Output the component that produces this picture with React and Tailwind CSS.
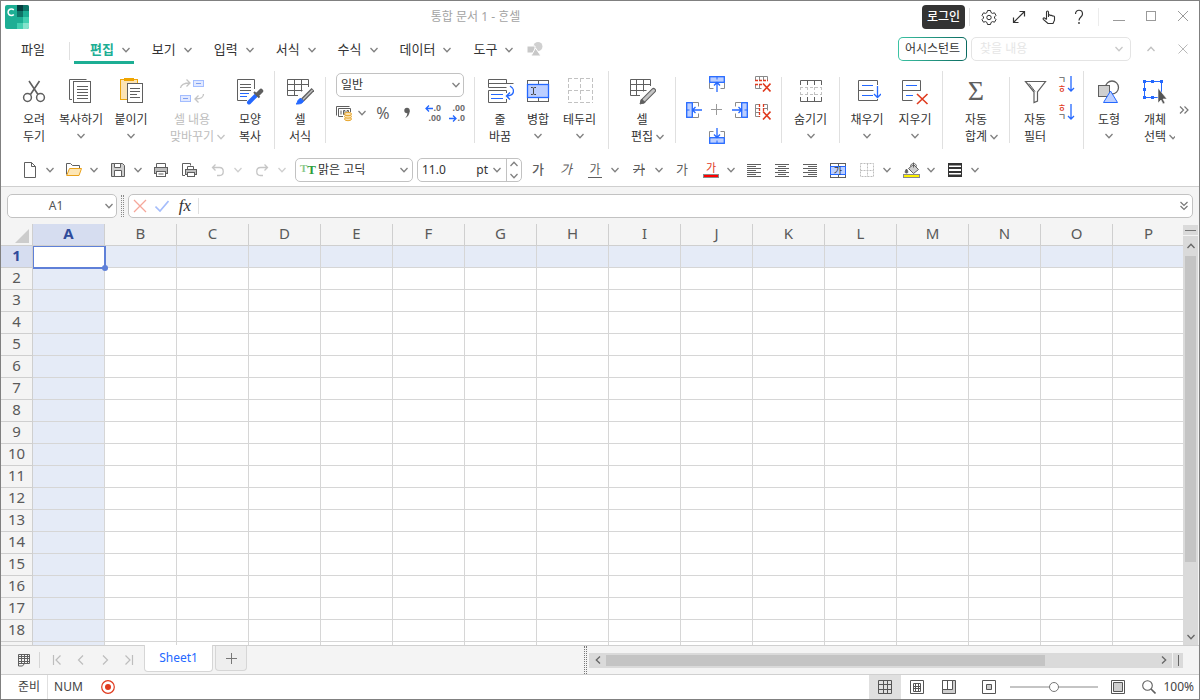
import React, { useEffect, useRef, useState } from 'react';
import { clsx } from 'clsx';

const GREY = '#5f5f5f';
const BLUE = '#2468ff';
const PALE = '#bccfff';
const RED = '#e03a1e';

const Ico = ({ w = 28, h = w, stroke = GREY, className, children }) => (
  <svg
    width={w}
    height={h}
    viewBox={`0 0 ${w} ${h}`}
    fill="none"
    stroke={stroke}
    className={clsx('block shrink-0', className)}
    aria-hidden="true"
  >
    {children}
  </svg>
);

const Chevron = ({ stroke = '#808080', className }) => (
  <Ico w={10} h={8} stroke={stroke} className={className}>
    <path d="M1.5 2l3.5 3.7L8.500 2" strokeWidth="1.3" />
  </Ico>
);

/* ---------- ribbon icons ---------- */

const ScissorsIcon = () => (
  <Ico>
    <path d="M9 4l9 13.500M19.500 4l-9 13.500" strokeWidth="1.6" />
    <circle cx="7.500" cy="20.500" r="3.900" strokeWidth="1.5" />
    <circle cx="20.500" cy="20.500" r="3.900" strokeWidth="1.5" />
  </Ico>
);

const CopyIcon = () => (
  <Ico>
    <path d="M19.500 2.500h-17v20h2.500" />
    <rect x="6.500" y="4.500" width="17" height="21" />
    <path d="M10 9.500h11M10 12.500h11M10 15.500h11M10 18.500h11M10 21.500h11" />
  </Ico>
);

const PasteIcon = () => (
  <Ico>
    <rect x="3.500" y="2.500" width="17" height="20" fill="#fbe3b4" stroke="#eda60c" />
    <rect x="7" y="1" width="10" height="3" fill="#f0a500" stroke="none" />
    <rect x="10.500" y="6.500" width="15" height="19" fill="#fff" />
    <path d="M13 11.500h10M13 14.500h10M13 17.500h7M13 20.500h10" />
  </Ico>
);

const SwapIcon = () => (
  <Ico stroke="#c4c4c4">
    <path d="M2.500 11C3 7.500 6 6 12 6M8.500 2.500L12 6 8.500 9.500" strokeWidth="1.3" />
    <path d="M25.500 17c0 3.500-2 5-8.500 5M20.500 18.500L17 22l3.500 3.500" strokeWidth="1.3" />
    <rect x="15.500" y="3.500" width="10" height="6" fill="#e2e9ff" stroke="#a3bdff" />
    <rect x="2.500" y="18.500" width="10" height="6" fill="#e2e9ff" stroke="#a3bdff" />
    <path d="M18 6.500h5M5 21.500h5" stroke="#7f9ff0" />
  </Ico>
);

const FormatCopyIcon = () => (
  <Ico>
    <path d="M18.500 12V2.500h-17v21H11" />
    <path d="M4 7.500h11M4 10.500h11M4 13.500h11" />
    <path d="M4 16.500h9M4 19.500h7" stroke={BLUE} />
    <path d="M13 25.500l8-8" stroke={BLUE} strokeWidth="4" strokeLinecap="round" />
    <path d="M18 15l5.500 5.500" strokeWidth="2" />
    <path d="M22 17l3-3" strokeWidth="4.500" strokeLinecap="round" />
  </Ico>
);

const CellFormatIcon = () => (
  <Ico>
    <path d="M22.500 10V2.500h-21v16H12M1.500 7.500h21M1.500 13.500h15M8.500 2.500v16M15.500 2.500v12" />
    <path d="M27 12.500L16.500 23" strokeWidth="4" />
    <path d="M26.500 13L17 22.500" stroke="#bdbdbd" strokeWidth="1.6" />
    <path d="M10 27c2-1 1-5 5-5.500l2.500 2.500c-1 3-4.500 3-7.500 3z" fill={BLUE} stroke={BLUE} />
  </Ico>
);

const WrapIcon = () => (
  <Ico>
    <path d="M20.500 2.500h-18v8h18M20.500 2.500v4M2.500 6.500h25M20.500 16v-2.500h-18v12h18V22" />
    <path d="M5 17.500h12M5 21.500h12" stroke={BLUE} />
    <path d="M24 9c5 3 5 9.500-3 10M24 15.500L20.500 19l3.500 3.500" stroke={BLUE} strokeWidth="1.4" />
  </Ico>
);

const MergeIcon = () => (
  <Ico>
    <rect x="3.500" y="3.500" width="21" height="21" />
    <path d="M14.500 3.500v21" />
    <rect x="3.500" y="7.500" width="21" height="13" fill={PALE} stroke={BLUE} strokeWidth="1.3" />
    <path d="M7 10.500c1.500 0 2.500 0 2.500 1v5c0 1-1 1-2.500 1M12 10.500c-1.500 0-2.500 0-2.500 1M12 17.500c-1.500 0-2.500 0-2.500-1" stroke="#444" />
  </Ico>
);

const BorderIcon = () => (
  <Ico stroke="#c2c2c2">
    <path d="M2 1.500h25M2 13.500h25M2 25.500h25M2.500 1v25M14.500 1v25M26.500 1v25" strokeDasharray="4 2" />
  </Ico>
);

const CellEditIcon = () => (
  <Ico>
    <path d="M22.500 9V2.500h-20v16H12M2.500 7.500h20M2.500 13.500h16M8.500 2.500v16M15.500 2.500v12" />
    <path d="M25.500 13.500L15 24" strokeWidth="5" strokeLinecap="round" />
    <path d="M25.500 13.500L16 23" stroke="#c4c4c4" strokeWidth="3" strokeLinecap="round" />
    <path d="M13.500 22l-1.500 5 5-1.500z" fill={GREY} />
  </Ico>
);

const HideIcon = () => (
  <Ico>
    <path d="M3.500 8V3.500h21V8M10.500 3.500V8M17.500 3.500V8M3.500 20v4.500h21V20M10.500 20v4.500M17.500 20v4.500" />
    <path d="M3 10.500h22M3 17.500h22M3.500 10v8M10.500 10v8M17.500 10v8M24.500 10v8" stroke="#c2c2c2" strokeDasharray="3 2" />
  </Ico>
);

const FillIcon = () => (
  <Ico>
    <path d="M24.500 8V3.500h-19v20h19V22M5.500 13.500h15" />
    <path d="M9 8.500h11M9 18.500h11" stroke={BLUE} />
    <path d="M24.500 9v11M21 17l3.500 3.500L28 17" stroke={BLUE} strokeWidth="1.3" />
  </Ico>
);

const EraseIcon = () => (
  <Ico>
    <path d="M19.500 14V3.500h-18v20h10M1.500 13.500h18" />
    <path d="M5 8.500h11M5 18.500h7" stroke={BLUE} />
    <path d="M16 17l10.500 10M26.500 17L16 27" stroke={RED} strokeWidth="1.6" />
  </Ico>
);

const FunnelIcon = () => (
  <Ico>
    <path d="M4.500 4.500h20l-8 10.500V24l-3.500 1.500V15z" strokeWidth="1.200" />
    <path d="M8 6.500l6 8" />
  </Ico>
);

const ShapesIcon = () => (
  <Ico>
    <circle cx="17" cy="10.500" r="6.500" strokeWidth="1.300" />
    <rect x="3.500" y="8.500" width="11" height="11" fill="#cfcfcf" />
    <path d="M15.500 14l7 11.500h-14z" fill={PALE} stroke={BLUE} />
  </Ico>
);

const ObjectSelectIcon = () => (
  <Ico>
    <rect x="3.500" y="4.500" width="17" height="16" stroke={BLUE} />
    <path
      d="M2 3h3v3H2zM10 3h3v3h-3zM19 3h3v3h-3zM2 11h3v3H2zM2 19h3v3H2zM10 19h3v3h-3z"
      fill={BLUE}
      stroke="none"
    />
    <path d="M17 11v15l3-3 2 4 2-1-2-4h4z" fill="#555" stroke="#fff" strokeWidth=".6" />
  </Ico>
);

const SigmaIcon = () => (
  <span className="flex h-7 w-7 items-center justify-center font-['Liberation_Serif',serif] text-[28px] leading-7 text-[#5f5f5f]">
    Σ
  </span>
);

/* insert / delete cell icons share one drawing, turned to each side */
const InsertCellsIcon = ({ turn }) => (
  <Ico w={16}>
    <g transform={`rotate(${turn} 8 8)`}>
      <path d="M.5 7v5.500h4M15.500 7v5.500h-4" stroke="#8a8a8a" />
      <rect x=".7" y=".7" width="14.600" height="5.600" fill={PALE} stroke={BLUE} strokeWidth="1.3" />
      <path d="M8 .5v3" stroke={BLUE} />
      <path d="M8 16V6.500M5 9.500l3-3 3 3" stroke={BLUE} strokeWidth="1.3" />
    </g>
  </Ico>
);

const DeleteCellsIcon = ({ vertical }) => (
  <Ico w={16}>
    <g transform={vertical ? 'matrix(0 1 1 0 0 0)' : undefined}>
      <path d="M.5 4V.5h12V4M4.500.5V4M8.500.5V4M.5 9v3.500h6M4.500 9v3" stroke="#8a8a8a" />
      <path d="M0 4.500h13M0 8.500h7" stroke={RED} strokeDasharray="3 1" strokeWidth="1.3" />
    </g>
    <path d="M8 7.500l7.500 8M15.500 7.500l-7.500 8" stroke={RED} strokeWidth="1.6" />
  </Ico>
);

const CurrencyIcon = () => (
  <Ico w={17}>
    <path d="M.5 10.500V1.500h13M2.500 11.500V3.500h12V7M2.500 11.500H7" />
    <path d="M5 5.500v4M7.500 5.500h1.500v4H7.500zM11 7V5.500h1.500V7" />
    <g fill="#fbe3b4" stroke="#e8a62c">
      <ellipse cx="12" cy="14" rx="3.500" ry="1.700" />
      <ellipse cx="12" cy="11.500" rx="3.500" ry="1.700" />
      <ellipse cx="12" cy="9" rx="3.500" ry="1.700" />
    </g>
  </Ico>
);

/* ---------- quick toolbar icons ---------- */

const NewIcon = () => (
  <Ico w={16}>
    <path d="M2.500.5h7l4 4v11h-11zM9.500.5v4h4" />
  </Ico>
);

const OpenIcon = () => (
  <Ico w={16}>
    <path d="M.5 12.500v-11h4l2 2h7V6" />
    <path d="M3.500 6.500h12l-2.500 7H.7z" fill="#fde6b5" stroke="#eaa21a" />
  </Ico>
);

const SaveIcon = () => (
  <Ico w={16}>
    <path d="M1.500 1.500h11l2 2v11h-13z" fill="#cfcfcf" />
    <path d="M4.500 1.500h6v4h-6zM4.500 8.500h7v6h-7z" fill="#fff" />
  </Ico>
);

const PrintIcon = () => (
  <Ico w={16}>
    <path d="M3.500 5V1.500h9V5" />
    <rect x="1.500" y="5.500" width="13" height="6" fill="#bdbdbd" />
    <rect x="3.500" y="9.500" width="9" height="5" fill="#fff" />
    <path d="M5.500 12h5" />
  </Ico>
);

const PreviewIcon = () => (
  <Ico w={16}>
    <path d="M4 13.500H1.500v-12h8V3.500" />
    <path d="M6.500 7V4.500h6V7" />
    <rect x="4.500" y="7.500" width="11" height="5" fill="#bdbdbd" />
    <rect x="6.500" y="10.500" width="7" height="4" fill="#fff" />
  </Ico>
);

const UndoIcon = ({ flip }) => (
  <Ico w={14} stroke="#c6c6c6" className={flip && '-scale-x-100'}>
    <path d="M4.500 1.500L1.500 4.500l3 3M1.500 4.500h7c5 0 5 8 0 8H6" strokeWidth="1.300" />
  </Ico>
);

const AlignIcon = ({ side }) => {
  const short = { left: 'M1 4.500h9M1 8.500h9M1 12.500h9', center: 'M4 4.500h8M4 8.500h8M4 12.500h8', right: 'M6 4.500h9M6 8.500h9M6 12.500h9' };
  return (
    <Ico w={16}>
      <path d="M1 2.500h14M1 6.500h14M1 10.500h14M1 14.500h14" />
      <path d={short[side]} />
    </Ico>
  );
};

const MergeCenterIcon = () => (
  <Ico w={16}>
    <rect x=".5" y="1.500" width="15" height="14" />
    <path d="M8.500 1.500v14" />
    <rect x=".5" y="4.500" width="15" height="8" fill={PALE} stroke={BLUE} />
    <text x="8" y="12" textAnchor="middle" fontSize="9" fill="#333" stroke="none">가</text>
  </Ico>
);

const SmallBorderIcon = () => (
  <Ico w={14} stroke="#bdbdbd">
    <path d="M.5.500h13v13H.5zM7.500.500v13M.5 7.500h13" strokeDasharray="2 1" />
  </Ico>
);

const BucketIcon = () => (
  <Ico w={17}>
    <path d="M5.500 6.500l5-4 5 5-5 4z" fill="#cfcfcf" />
    <path d="M10.500.5v5M7.500 4.500c0-4 6-4 6 0" />
    <path d="M3.500 7c-2 3-1.500 4 0 4s2-1 0-4z" fill={GREY} />
    <rect x=".5" y="12.500" width="16" height="3" fill="#fff200" stroke="#8a8a8a" />
  </Ico>
);

const LineStyleIcon = () => (
  <Ico w={14} stroke="#333">
    <rect x=".5" y=".5" width="13" height="13" />
    <path d="M0 1.500h14M0 5h14M0 9h14M0 12.500h14" strokeWidth="2" />
  </Ico>
);

/* ---------- building blocks ---------- */

const Divider = ({ tall }) => (
  <div className={clsx('mx-[3px] w-px shrink-0 bg-[#e0e0e0]', tall ? 'h-[78px]' : 'h-[66px]')} />
);

const RibbonButton = ({ icon, lines, menu, side, disabled, className }) => (
  <button
    type="button"
    disabled={disabled}
    className={clsx(
      'flex h-[70px] shrink-0 flex-col items-center pt-0.5 text-xs leading-[17px] whitespace-nowrap',
      disabled ? 'text-[#bdbdbd]' : 'text-[#333]',
      className
    )}
  >
    {icon}
    <span className="mt-1.5">{lines[0]}</span>
    {lines[1] && (
      <span className="flex items-center">
        {lines[1]}
        {side && <Chevron className="-mr-3 ml-0.5" stroke={disabled ? '#c4c4c4' : '#808080'} />}
      </span>
    )}
    {menu && <Chevron className="mt-1" />}
  </button>
);

const ToolButton = ({ label, menu, faded, children }) => (
  <div className="flex shrink-0 items-center">
    <button
      type="button"
      aria-label={label}
      className={clsx('flex h-6 items-center justify-center text-[#5f5f5f]', menu ? 'w-[26px]' : 'w-6')}
    >
      {children}
    </button>
    {menu && (
      <button type="button" aria-label={`${label} 메뉴`} className="flex h-6 w-[14px] items-center justify-center">
        <Chevron stroke={faded ? '#cfcfcf' : '#808080'} />
      </button>
    )}
  </div>
);

const IconButton = ({ label, className, children }) => (
  <button type="button" aria-label={label} className={clsx('flex shrink-0 items-center justify-center', className)}>
    {children}
  </button>
);

/* ---------- sections ---------- */

const Logo = () => (
  <Ico w={24} stroke="none">
    <rect width="24" height="24" rx="2" fill="#1dae94" />
    <path d="M12 0h6v6h-6z" fill="#063f40" />
    <path d="M18 0h4a2 2 0 012 2v4h-6z" fill="#0d7568" />
    <path d="M12 6h6v6h-6z" fill="#0f7468" />
    <path d="M18 6h6v6h-6z" fill="#1dae94" />
    <path d="M18 12h6v6h-6zM12 18h6v6h-6z" fill="#42cfb0" />
    <path d="M18 18h6v4a2 2 0 01-2 2h-4z" fill="#86e3cc" />
    <path d="M8.800 5A3.300 3.300 0 108.800 9.500" stroke="#fff" strokeWidth="1.500" />
  </Ico>
);

const TitleBar = () => (
  <header className="flex h-8 shrink-0 items-center pl-1">
    <Logo />
    <h1 className="min-w-0 flex-1 truncate text-center text-xs text-[#a3a3a3]">통합 문서 1 - ᄒᆞᆫ셀</h1>
    <button type="button" className="h-6 w-[43px] rounded bg-[#333] text-xs font-medium text-white">로그인</button>
    <div className="mx-1 h-[18px] w-px bg-[#e0e0e0]" />
    <IconButton label="설정" className="h-8 w-[30px]">
      <Ico w={16} stroke="#333">
        <path d="M6.500 1.500h3l.5 2 1.500.9 2-.6 1.500 2.600-1.500 1.500v1.200l1.500 1.500-1.500 2.600-2-.6-1.500.9-.5 2h-3l-.5-2-1.500-.9-2 .6L1 10.600l1.500-1.500V7.900L1 6.400l1.500-2.600 2 .6L6 3.500z" strokeLinejoin="round" />
        <circle cx="8" cy="8.500" r="2.200" />
      </Ico>
    </IconButton>
    <IconButton label="전체 화면" className="h-8 w-[30px]">
      <Ico w={14} stroke="#333">
        <path d="M2 12L12 2M7.500 1.500h5v5M1.500 7.500v5h5" strokeWidth="1.200" />
      </Ico>
    </IconButton>
    <IconButton label="터치 모드" className="h-8 w-[30px]">
      <Ico w={14} stroke="#333">
        <path d="M4.500 9.500V2.200c0-1.600 2-1.600 2 0V7M6.500 5.500c.5-1 2-.8 2 .3M8.500 6c.5-1 2-.8 2 .3M10.500 6.500c.6-.8 2-.5 2 .6v3l-1.500 3.400H6L1.300 9.300c-.6-1.200.8-1.800 1.500-1.200l1.700 1.400" strokeWidth="1.100" />
      </Ico>
    </IconButton>
    <IconButton label="도움말" className="h-8 w-[30px]">
      <Ico w={12} h={16} stroke="#333">
        <path d="M2.500 5c0-5 7-5 7 0 0 3-3.500 3-3.500 6.500" strokeWidth="1.200" />
        <circle cx="6" cy="14" r=".9" fill="#333" stroke="none" />
      </Ico>
    </IconButton>
    <div className="mx-1 h-[18px] w-px bg-[#ececec]" />
    <IconButton label="최소화" className="h-8 w-8">
      <Ico w={12} stroke="#9a9a9a"><path d="M0 9.500h12" /></Ico>
    </IconButton>
    <IconButton label="최대화" className="h-8 w-8">
      <Ico w={12} stroke="#9a9a9a"><rect x="1.500" y=".5" width="9" height="9" /></Ico>
    </IconButton>
    <IconButton label="닫기" className="h-8 w-8">
      <Ico w={12} stroke="#9a9a9a"><path d="M1 0l10 10M11 0L1 10" /></Ico>
    </IconButton>
  </header>
);

const menus = ['편집', '보기', '입력', '서식', '수식', '데이터', '도구'];

const MenuBar = () => {
  const [active, setActive] = useState('편집');

  return (
    <nav className="flex h-[33px] shrink-0 text-[13px] text-[#333]">
      <button type="button" className="h-[31px] shrink-0 pt-0.5 pl-5">파일</button>
      <div className="mt-[9px] mr-1 ml-6 h-[18px] w-px shrink-0 bg-[#e0e0e0]" />
      <div className="flex shrink-0 gap-0.5">
        {menus.map((name) => (
          <button
            key={name}
            type="button"
            onClick={() => setActive(name)}
            className={clsx(
              'flex h-[31px] items-center gap-[7px] border-b-[3px] pt-1.5 pr-[3px] pl-4',
              name === active ? 'border-[#1dae94] font-bold text-[#1dae94]' : 'border-transparent'
            )}
          >
            {name}
            <Chevron />
          </button>
        ))}
      </div>
      <Ico w={16} className="mt-2 ml-2.5" stroke="none">
        <circle cx="11" cy="5.500" r="4.500" fill="#d0d0d0" />
        <path d="M0 5h8v7H0z" fill="#c8c8c8" stroke="#fff" />
        <path d="M8.500 7l5.500 8H4z" fill="#c8c8c8" stroke="#fff" />
      </Ico>
      <div className="ml-auto flex h-8 shrink-0 items-center">
        <div className="mr-1 rounded-[5px] bg-gradient-to-r from-[#3cc4a4] to-[#0a6a60] p-px">
          <button type="button" className="block h-[22px] w-[67px] rounded bg-white text-xs whitespace-nowrap">어시스턴트</button>
        </div>
        <div className="flex h-6 w-40 items-center rounded-[5px] border border-[#e4e4e4] pr-1.5 pl-2">
          <input
            type="text"
            aria-label="찾을 내용"
            placeholder="찾을 내용"
            className="w-0 flex-1 text-xs outline-none placeholder:text-[#e6e6e6]"
          />
          <Chevron stroke="#c8c8c8" />
        </div>
        <IconButton label="리본 접기" className="ml-1 h-6 w-8">
          <Chevron stroke="#c0c0c0" className="rotate-180" />
        </IconButton>
        <IconButton label="문서 닫기" className="h-6 w-8">
          <Ico w={10} stroke="#b8b8b8"><path d="M.5.500l9 9M9.500.500l-9 9" /></Ico>
        </IconButton>
      </div>
    </nav>
  );
};

const DecimalIcon = ({ more }) => (
  <span className="flex w-4 flex-col font-['Liberation_Sans',sans-serif] text-[9px] leading-[10px] font-bold text-[#6a6a6a]">
    <span className="flex items-center justify-end">
      {!more && (
        <Ico w={8} h={7} stroke={BLUE}><path d="M8 3.500H1M4 .5l-3 3 3 3" strokeWidth="1.300" /></Ico>
      )}
      {more ? '.00' : '.0'}
    </span>
    <span className="flex items-center justify-end">
      {more && (
        <Ico w={8} h={7} stroke={BLUE}><path d="M0 3.500h7M4 .5l3 3-3 3" strokeWidth="1.300" /></Ico>
      )}
      {more ? '.0' : '.00'}
    </span>
  </span>
);

const NumberGroup = () => (
  <div className="flex h-[74px] w-[142px] shrink-0 flex-col px-[7px]">
    <div className="relative">
      <select
        aria-label="표시 형식"
        className="block h-6 w-full appearance-none rounded-[5px] border border-[#c2c2c2] bg-white pl-1 text-xs text-[#333]"
      >
        <option>일반</option>
      </select>
      <Chevron className="pointer-events-none absolute top-2 right-[3px]" />
    </div>
    <div className="mt-1 flex items-center">
      <IconButton label="통화" className="h-6 w-[17px]"><CurrencyIcon /></IconButton>
      <IconButton label="통화 메뉴" className="h-6 w-[18px]"><Chevron /></IconButton>
      <IconButton label="백분율" className="h-6 w-6 text-base text-[#5f5f5f]">%</IconButton>
      <IconButton label="쉼표" className="h-6 w-6">
        <Ico w={8} h={12} stroke="none">
          <circle cx="4" cy="3.500" r="2.700" fill={GREY} />
          <path d="M6.700 3.500c0 4-2 6.500-4.500 7.500 1.800-2 2.300-3.500 2-6z" fill={GREY} />
        </Ico>
      </IconButton>
      <div className="h-5 w-px bg-[#e0e0e0]" />
      <IconButton label="자릿수 줄임" className="h-6 w-7"><DecimalIcon /></IconButton>
      <IconButton label="자릿수 늘림" className="h-6 w-5"><DecimalIcon more /></IconButton>
    </div>
  </div>
);

const InsertGroup = () => (
  <div className="flex w-[99px] shrink-0 items-center gap-[7px] px-[7px]">
    <IconButton label="왼쪽에 열 추가"><InsertCellsIcon turn={-90} /></IconButton>
    <div className="flex flex-col items-center gap-2.5">
      <IconButton label="위에 행 추가"><InsertCellsIcon turn={0} /></IconButton>
      <Ico w={16} stroke="#9a9a9a"><path d="M7.500 2v11M2 7.500h11" /></Ico>
      <IconButton label="아래에 행 추가"><InsertCellsIcon turn={180} /></IconButton>
    </div>
    <IconButton label="오른쪽에 열 추가"><InsertCellsIcon turn={90} /></IconButton>
    <div className="flex flex-col gap-3 self-start">
      <IconButton label="행 지우기"><DeleteCellsIcon /></IconButton>
      <IconButton label="열 지우기"><DeleteCellsIcon vertical /></IconButton>
    </div>
  </div>
);

const SortButton = ({ label, top, bottom, reverse }) => (
  <IconButton label={label} className="h-[18px] w-[18px]">
    <span className="flex w-[10px] flex-col items-center text-[9px] leading-[9px] font-medium">
      <span className={reverse ? 'text-[#e03a1e]' : 'text-[#5f5f5f]'}>{top}</span>
      <span className={reverse ? 'text-[#5f5f5f]' : 'text-[#e03a1e]'}>{bottom}</span>
    </span>
    <Ico w={8} h={16} stroke={BLUE}>
      <path d="M4 0v15M1 12l3 3 3-3" strokeWidth="1.300" />
    </Ico>
  </IconButton>
);

const Ribbon = () => (
  <div className="flex h-[88px] shrink-0 items-center overflow-hidden pl-3">
    <RibbonButton icon={<ScissorsIcon />} lines={['오려', '두기']} className="w-[42px]" />
    <RibbonButton icon={<CopyIcon />} lines={['복사하기']} menu className="w-[52px]" />
    <RibbonButton icon={<PasteIcon />} lines={['붙이기']} menu className="w-12" />
    <RibbonButton icon={<SwapIcon />} lines={['셀 내용', '맞바꾸기']} side disabled className="w-[74px]" />
    <RibbonButton icon={<FormatCopyIcon />} lines={['모양', '복사']} className="w-[42px]" />
    <Divider tall />
    <RibbonButton icon={<CellFormatIcon />} lines={['셀', '서식']} className="w-11" />
    <Divider />
    <NumberGroup />
    <Divider />
    <RibbonButton icon={<WrapIcon />} lines={['줄', '바꿈']} className="w-11" />
    <RibbonButton icon={<MergeIcon />} lines={['병합']} menu className="w-8" />
    <RibbonButton icon={<BorderIcon />} lines={['테두리']} menu className="w-[51px]" />
    <Divider tall />
    <RibbonButton icon={<CellEditIcon />} lines={['셀', '편집']} side className="w-[60px]" />
    <Divider />
    <InsertGroup />
    <Divider />
    <RibbonButton icon={<HideIcon />} lines={['숨기기']} menu className="w-[51px]" />
    <Divider />
    <RibbonButton icon={<FillIcon />} lines={['채우기']} menu className="w-12" />
    <RibbonButton icon={<EraseIcon />} lines={['지우기']} menu className="w-12" />
    <Divider tall />
    <RibbonButton icon={<SigmaIcon />} lines={['자동', '합계']} side className="w-[60px]" />
    <Divider />
    <RibbonButton icon={<FunnelIcon />} lines={['자동', '필터']} className="w-11" />
    <div className="flex h-[70px] w-[23px] shrink-0 flex-col gap-2.5">
      <SortButton label="오름차순 정렬" top="ㄱ" bottom="ㅎ" />
      <SortButton label="내림차순 정렬" top="ㅎ" bottom="ㄱ" reverse />
    </div>
    <Divider tall />
    <RibbonButton icon={<ShapesIcon />} lines={['도형']} menu className="w-11" />
    <RibbonButton icon={<ObjectSelectIcon />} lines={['개체', '선택']} side className="ml-1 w-10 overflow-hidden" />
    <IconButton label="더 보기" className="h-6 w-[18px]">
      <Ico w={10} h={8} stroke="#777"><path d="M1 .5L4.500 4 1 7.500M5.500.5L9 4 5.500 7.500" strokeWidth="1.200" /></Ico>
    </IconButton>
  </div>
);

const QuickBar = () => (
  <div className="flex h-8 shrink-0 items-center gap-1 overflow-hidden pl-4">
    <ToolButton label="새 문서" menu><NewIcon /></ToolButton>
    <ToolButton label="불러오기" menu><OpenIcon /></ToolButton>
    <ToolButton label="저장하기" menu><SaveIcon /></ToolButton>
    <ToolButton label="인쇄"><PrintIcon /></ToolButton>
    <ToolButton label="미리 보기"><PreviewIcon /></ToolButton>
    <ToolButton label="되돌리기" menu faded><UndoIcon /></ToolButton>
    <ToolButton label="다시 실행" menu faded><UndoIcon flip /></ToolButton>
    <div className="ml-0.5 flex h-6 w-[118px] shrink-0 items-center rounded-[5px] border border-[#c2c2c2] pr-[3px] pl-1">
      <span className="flex w-[14px] font-['Liberation_Serif',serif] font-bold" aria-hidden="true">
        <span className="text-[11px] leading-3 text-[#8cc98c]">T</span>
        <span className="text-[13px] leading-4 text-[#2f9e3a]">T</span>
      </span>
      <select aria-label="글꼴" className="ml-1 w-0 flex-1 appearance-none bg-transparent text-xs text-[#333]">
        <option>맑은 고딕</option>
      </select>
      <Chevron className="pointer-events-none" />
    </div>
    <div className="flex h-6 w-[105px] shrink-0 items-center rounded-[5px] border border-[#c2c2c2] text-xs text-[#333]">
      <input type="text" aria-label="글자 크기" defaultValue="11.0" className="w-0 flex-1 pl-1 outline-none" />
      <span>pt</span>
      <IconButton label="크기 목록" className="h-5 w-[18px]"><Chevron /></IconButton>
      <div className="flex h-full w-[15px] flex-col items-center justify-center gap-1 border-l border-[#c2c2c2]">
        <IconButton label="크게"><Chevron className="rotate-180" /></IconButton>
        <IconButton label="작게"><Chevron /></IconButton>
      </div>
    </div>
    <ToolButton label="진하게"><span className="text-[13px] font-medium">가</span></ToolButton>
    <ToolButton label="기울임"><span className="text-[13px] italic">가</span></ToolButton>
    <ToolButton label="밑줄" menu>
      <span className="w-[14px] border-b border-[#5f5f5f] text-center text-xs leading-[14px]">가</span>
    </ToolButton>
    <ToolButton label="취소선" menu><span className="text-[13px] line-through">가</span></ToolButton>
    <ToolButton label="외곽선"><span className="text-[13px]">가</span></ToolButton>
    <ToolButton label="글자 색" menu>
      <span className="flex flex-col items-center text-[11px] leading-3 text-[#e03a1e]">
        가
        <span className="h-1 w-4 border border-[#8a8a8a] bg-[#f00]" />
      </span>
    </ToolButton>
    <ToolButton label="왼쪽 정렬"><AlignIcon side="left" /></ToolButton>
    <ToolButton label="가운데 정렬"><AlignIcon side="center" /></ToolButton>
    <ToolButton label="오른쪽 정렬"><AlignIcon side="right" /></ToolButton>
    <ToolButton label="병합하고 가운데 맞춤"><MergeCenterIcon /></ToolButton>
    <ToolButton label="테두리" menu><SmallBorderIcon /></ToolButton>
    <ToolButton label="채우기 색" menu><BucketIcon /></ToolButton>
    <ToolButton label="선 모양" menu><LineStyleIcon /></ToolButton>
  </div>
);

const FormulaBar = () => (
  <div className="flex h-[38px] shrink-0 items-center border-t border-[#cfcfcf] bg-[#f4f4f4] pr-1.5 pl-1.5">
    <div className="flex h-6 w-[110px] shrink-0 items-center rounded-[5px] border border-[#c2c2c2] bg-white pr-0.5">
      <input
        type="text"
        aria-label="이름 상자"
        defaultValue="A1"
        className="w-0 flex-1 text-center text-xs text-[#555] outline-none"
      />
      <Chevron />
    </div>
    <div className="mx-1 h-[22px] w-[3px] border-x border-dotted border-[#8a8a8a]" />
    <div className="flex h-6 flex-1 items-center rounded-[5px] border border-[#c2c2c2] bg-white px-1">
      <IconButton label="취소" className="h-5 w-[14px]">
        <Ico w={14} stroke="#f5a79b"><path d="M1 1l12 12M13 1L1 13" strokeWidth="1.300" /></Ico>
      </IconButton>
      <IconButton label="입력" className="ml-2 h-5 w-[14px]">
        <Ico w={14} stroke="#a5bdfb"><path d="M.5 7.500l4.500 4.500L13.500 2" strokeWidth="1.600" /></Ico>
      </IconButton>
      <IconButton label="함수" className="ml-2 h-5 w-4 font-['Liberation_Serif',serif] text-[17px] text-[#333] italic">
        fx
      </IconButton>
      <div className="ml-[5px] h-4 w-px bg-[#e0e0e0]" />
      <input type="text" aria-label="수식 입력줄" className="h-5 w-0 flex-1 px-1 text-xs outline-none" />
      <IconButton label="수식 입력줄 확장">
        <Ico w={8} h={10} stroke="#777"><path d="M.5 1L4 4.500 7.500 1M.5 5L4 8.500 7.500 5" strokeWidth="1.200" /></Ico>
      </IconButton>
    </div>
  </div>
);

const COL_WIDTH = 72;
const ROW_HEIGHT = 22;

const colName = (i) => (i < 26 ? '' : String.fromCharCode(64 + Math.floor(i / 26))) + String.fromCharCode(65 + (i % 26));

const Grid = () => {
  const box = useRef(null);
  const [size, setSize] = useState({ cols: 16, rows: 18.5 });

  // draw only as many cells as fit in the window
  useEffect(() => {
    const measure = () => {
      const { clientWidth, clientHeight } = box.current;
      setSize({
        cols: Math.max(1, Math.ceil((clientWidth - 32) / COL_WIDTH)),
        rows: Math.max(1, (clientHeight - ROW_HEIGHT) / ROW_HEIGHT),
      });
    };
    measure();
    const observer = new ResizeObserver(measure);
    observer.observe(box.current);
    return () => observer.disconnect();
  }, []);

  const cols = Array.from({ length: size.cols }, (_, i) => i);
  const rows = Array.from({ length: Math.ceil(size.rows) }, (_, i) => i);

  return (
    <div ref={box} className="h-full min-w-0 flex-1 overflow-hidden bg-white">
      <table className="w-max table-fixed border-separate border-spacing-0 text-[15px] text-[#5a5a5a]">
        <thead>
          <tr className="h-[22px] bg-[#f4f4f4]">
            <th className="w-8 min-w-8 border-r border-b border-[#cfcfcf] p-0">
              <Ico w={16} className="ml-[13px]" stroke="none"><path d="M15 2v14H1z" fill="#cccccc" /></Ico>
            </th>
            {cols.map((c) => (
              <th
                key={c}
                className={clsx(
                  'w-[72px] min-w-[72px] border-r border-b border-[#cfcfcf] p-0 pb-[3px] leading-[18px]',
                  c === 0 ? 'bg-[#d6ddf0] font-bold text-[#2f4b9b]' : 'font-normal'
                )}
              >
                {colName(c)}
              </th>
            ))}
          </tr>
        </thead>
        <tbody>
          {rows.map((r) => (
            <tr key={r} className="h-[22px]">
              <th
                className={clsx(
                  'border-r border-b border-[#cfcfcf] p-0 pb-[3px] leading-[18px]',
                  r === 0 ? 'bg-[#d6ddf0] font-bold text-[#2f4b9b]' : 'bg-[#f4f4f4] font-normal'
                )}
              >
                {/* a row cut by the sheet tabs gets no number */}
                {r + 1 <= size.rows && r + 1}
              </th>
              {cols.map((c) => (
                <td
                  key={c}
                  className={clsx(
                    'border-r border-b border-[#d6d6d6] p-0',
                    r === 0 && c === 0 && 'relative bg-white',
                    (r === 0) !== (c === 0) && 'bg-[#e5ebf7]'
                  )}
                >
                  {r === 0 && c === 0 && (
                    <div className="absolute -right-0.5 -bottom-0.5 top-0 left-0 z-10 border border-r-2 border-b-2 border-[#5f80d8]">
                      <div className="absolute -right-1 -bottom-1 h-1.5 w-1.5 rounded-full bg-[#5f80d8]" />
                    </div>
                  )}
                </td>
              ))}
            </tr>
          ))}
        </tbody>
      </table>
    </div>
  );
};

const VerticalScroll = () => (
  <div className="flex w-4 shrink-0 flex-col bg-[#f4f4f4] pr-px">
    <div className="mt-px flex h-[10px] items-center justify-center bg-[#dadada]">
      <div className="h-px w-[11px] bg-[#777]" />
    </div>
    <div className="mt-px flex flex-1 flex-col items-center bg-[#dadada]">
      <IconButton label="위로" className="h-5 w-full"><Chevron className="rotate-180" stroke="#666" /></IconButton>
      <div className="w-full flex-1 px-0.5">
        <div className="h-[82%] w-[11px] bg-[#c4c4c4]" />
      </div>
      <IconButton label="아래로" className="h-4 w-full"><Chevron stroke="#666" /></IconButton>
    </div>
  </div>
);

const SheetTabs = () => (
  <div className="flex h-[30px] shrink-0 items-stretch border-t border-b border-[#d0d0d0] bg-[#f4f4f4]">
    <div className="flex w-[583px] shrink items-center">
      <IconButton label="시트 목록" className="ml-4 h-6 w-[14px]">
        <Ico w={14}>
          <path d="M1.500 1.500h11v9h-11zM1.500 3.500h11M1.500 5.500h11M1.500 8.500h11M4.500 1.500v9M7.500 1.500v9M10.500 1.500v9M1.500 10v3h4l2-2.500" />
        </Ico>
      </IconButton>
      <div className="mr-[5px] ml-2 h-4 w-px bg-[#d6d6d6]" />
      <IconButton label="처음 시트" className="h-6 w-6">
        <Ico w={10} stroke="#bdbdbd"><path d="M1.500 0v10M8.500.500L4 5l4.500 4.500" strokeWidth="1.200" /></Ico>
      </IconButton>
      <IconButton label="이전 시트" className="h-6 w-6">
        <Ico w={10} stroke="#bdbdbd"><path d="M7 .5L2.500 5 7 9.500" strokeWidth="1.200" /></Ico>
      </IconButton>
      <IconButton label="다음 시트" className="h-6 w-6">
        <Ico w={10} stroke="#bdbdbd"><path d="M3 .5L7.500 5 3 9.500" strokeWidth="1.200" /></Ico>
      </IconButton>
      <IconButton label="마지막 시트" className="h-6 w-6">
        <Ico w={10} stroke="#bdbdbd"><path d="M8.500 0v10M1.500.500L6 5 1.500 9.500" strokeWidth="1.200" /></Ico>
      </IconButton>
      <button
        type="button"
        className="-mt-px ml-[3px] h-[27px] w-[69px] self-start rounded-b border border-t-0 border-[#d6d6d6] bg-white text-xs text-[#2468ff]"
      >
        Sheet1
      </button>
      <button
        type="button"
        aria-label="시트 추가"
        className="ml-0.5 flex h-[25px] w-8 items-center justify-center self-start rounded-b border border-t-0 border-[#d6d6d6] bg-[#eeeeee]"
      >
        <Ico w={12} stroke="#777"><path d="M6.500 1v11M1 6.500h11" /></Ico>
      </button>
    </div>
    <div className="w-[3px] border-x border-dotted border-[#777]" />
    <div className="mr-4 ml-0.5 flex h-[15px] flex-1 items-center self-center">
      <div className="flex h-full flex-1 items-center bg-[#dadada]">
        <IconButton label="왼쪽으로" className="h-full w-[17px]"><Chevron className="rotate-90" stroke="#666" /></IconButton>
        <div className="h-[11px] flex-1">
          <div className="h-full w-4/5 bg-[#c4c4c4]" />
        </div>
        <IconButton label="오른쪽으로" className="h-full w-[17px]"><Chevron className="-rotate-90" stroke="#666" /></IconButton>
      </div>
      <div className="ml-px flex h-full w-[10px] items-center justify-center bg-[#dadada]">
        <div className="h-[11px] w-px bg-[#666]" />
      </div>
    </div>
  </div>
);

const StatusBar = () => {
  const [zoom, setZoom] = useState(100);

  return (
    <footer className="flex h-6 shrink-0 items-center text-xs text-[#444]">
      <span className="pr-[7px] pl-[17px]">준비</span>
      <div className="h-full w-px bg-[#e0e0e0]" />
      <span className="pl-1.5">NUM</span>
      <Ico w={14} className="ml-[18px]" stroke={RED}>
        <circle cx="7" cy="7" r="6.300" strokeWidth="1.200" />
        <circle cx="7" cy="7" r="3" fill={RED} stroke="none" />
      </Ico>
      <div className="ml-auto flex h-full items-center">
        <IconButton label="기본 보기" className="h-full w-8 bg-[#e0e0e0]">
          <Ico w={14} stroke="#555"><path d="M.5.500h13v13H.5zM5.500.500v13M9.500.500v13M.5 4.500h13M.5 9.500h13" /></Ico>
        </IconButton>
        <IconButton label="쪽 보기" className="h-full w-8">
          <Ico w={14} stroke="#555"><path d="M.5.500h13v13H.5zM3.500 3.500h7v8h-7zM5.500 3.500v8M8.500 3.500v8M3.500 6.500h7M3.500 8.500h7" /></Ico>
        </IconButton>
        <IconButton label="쪽 나누기 보기" className="h-full w-8">
          <Ico w={14} stroke="#555">
            <path d="M.5.500h13v13H.5z" fill="#cfcfcf" />
            <path d="M.5.500h10v9H.5z" fill="#fff" />
            <path d="M5.500.500v9" />
          </Ico>
        </IconButton>
        <IconButton label="축소" className="ml-2 h-full w-8">
          <Ico w={14} stroke="#555"><path d="M.5.500h13v13H.5z" /><path d="M4.500 4.500h5v5h-5z" fill="#cfcfcf" /></Ico>
        </IconButton>
        <input
          type="range"
          aria-label="확대 비율"
          min="0"
          max="200"
          value={zoom}
          onChange={(e) => setZoom(Number(e.target.value))}
          className="ml-[5px] h-4 w-[88px] appearance-none bg-transparent [&::-webkit-slider-runnable-track]:h-0.5 [&::-webkit-slider-runnable-track]:bg-[#c4c4c4] [&::-webkit-slider-thumb]:-mt-1 [&::-webkit-slider-thumb]:h-[10px] [&::-webkit-slider-thumb]:w-[10px] [&::-webkit-slider-thumb]:appearance-none [&::-webkit-slider-thumb]:rounded-full [&::-webkit-slider-thumb]:border [&::-webkit-slider-thumb]:border-[#777] [&::-webkit-slider-thumb]:bg-white"
        />
        <IconButton label="확대" className="ml-1 h-full w-8">
          <Ico w={14} stroke="#555"><path d="M.5.500h13v13H.5z" /><path d="M2.500 2.500h9v9h-9z" fill="#cfcfcf" /></Ico>
        </IconButton>
        <Ico w={14} className="ml-2">
          <circle cx="5.500" cy="5.500" r="4.800" strokeWidth="1.100" />
          <path d="M9 9l4.500 4.500" strokeWidth="1.600" />
        </Ico>
        <span className="w-[43px] pr-[5px] text-right">{zoom}%</span>
      </div>
    </footer>
  );
};

const App = () => (
  <div className="flex h-screen flex-col overflow-hidden border border-[#808080] bg-white font-['Noto_Sans','Noto_Sans_CJK_KR',sans-serif]">
    <TitleBar />
    <MenuBar />
    <Ribbon />
    <QuickBar />
    <FormulaBar />
    <main className="flex min-h-0 flex-1">
      <Grid />
      <VerticalScroll />
    </main>
    <SheetTabs />
    <StatusBar />
  </div>
);

export default App;
